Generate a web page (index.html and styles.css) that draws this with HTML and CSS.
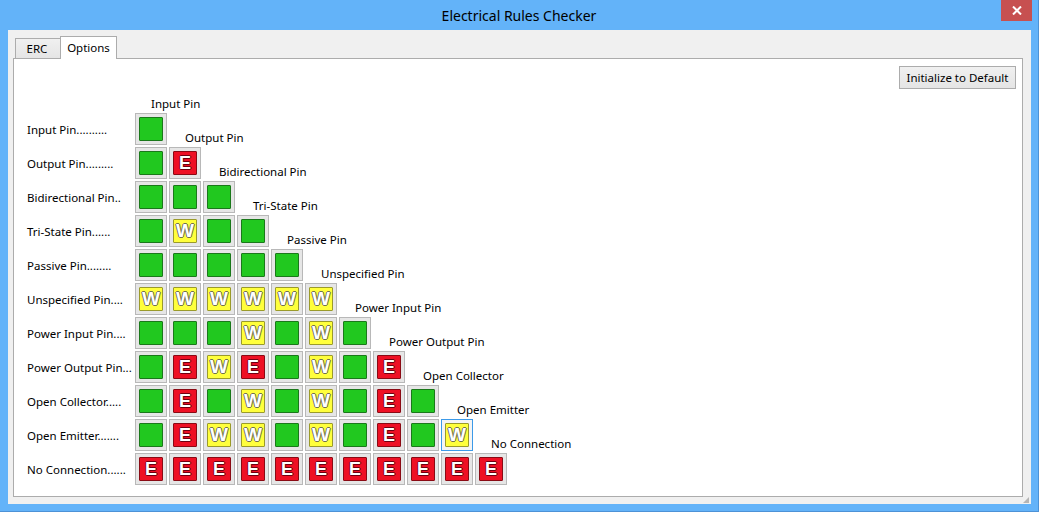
FILE: index.html
```html
<!DOCTYPE html>
<html lang="en">
<head>
    <meta charset="UTF-8">
    <title>Electrical Rules Checker</title>
    <link rel="stylesheet" href="styles.css">
</head>
<body>
    <div class="window">
        <div class="titlebar">
            <div></div>
            <div class="title">Electrical Rules Checker</div>
            <div class="title-right">
                <button class="close" aria-label="Close">
                    <svg width="10" height="9" viewBox="0 0 10 9"><path d="M1 0.5 L9 8.5 M9 0.5 L1 8.5" stroke="#fff" stroke-width="2"/></svg>
                </button>
            </div>
        </div>
        <div class="client">
            <div class="tabs">
                <div class="tab">ERC</div>
                <div class="tab active">Options</div>
            </div>
            <div class="panel">
                <div class="toolbar">
                    <button class="btn">Initialize to Default</button>
                </div>
                <div class="matrix">
                    <div class="row-label"></div>
                    <div class="col-head">Input Pin</div>

                    <div class="row-label">Input Pin..........</div>
                    <div class="cell"><span class="mark ok"></span></div>
                    <div class="col-head">Output Pin</div>

                    <div class="row-label">Output Pin.........</div>
                    <div class="cell"><span class="mark ok"></span></div>
                    <div class="cell"><span class="mark err">E</span></div>
                    <div class="col-head">Bidirectional Pin</div>

                    <div class="row-label">Bidirectional Pin..</div>
                    <div class="cell"><span class="mark ok"></span></div>
                    <div class="cell"><span class="mark ok"></span></div>
                    <div class="cell"><span class="mark ok"></span></div>
                    <div class="col-head">Tri-State Pin</div>

                    <div class="row-label">Tri-State Pin......</div>
                    <div class="cell"><span class="mark ok"></span></div>
                    <div class="cell"><span class="mark warn">W</span></div>
                    <div class="cell"><span class="mark ok"></span></div>
                    <div class="cell"><span class="mark ok"></span></div>
                    <div class="col-head">Passive Pin</div>

                    <div class="row-label">Passive Pin........</div>
                    <div class="cell"><span class="mark ok"></span></div>
                    <div class="cell"><span class="mark ok"></span></div>
                    <div class="cell"><span class="mark ok"></span></div>
                    <div class="cell"><span class="mark ok"></span></div>
                    <div class="cell"><span class="mark ok"></span></div>
                    <div class="col-head">Unspecified Pin</div>

                    <div class="row-label">Unspecified Pin....</div>
                    <div class="cell"><span class="mark warn">W</span></div>
                    <div class="cell"><span class="mark warn">W</span></div>
                    <div class="cell"><span class="mark warn">W</span></div>
                    <div class="cell"><span class="mark warn">W</span></div>
                    <div class="cell"><span class="mark warn">W</span></div>
                    <div class="cell"><span class="mark warn">W</span></div>
                    <div class="col-head">Power Input Pin</div>

                    <div class="row-label">Power Input Pin....</div>
                    <div class="cell"><span class="mark ok"></span></div>
                    <div class="cell"><span class="mark ok"></span></div>
                    <div class="cell"><span class="mark ok"></span></div>
                    <div class="cell"><span class="mark warn">W</span></div>
                    <div class="cell"><span class="mark ok"></span></div>
                    <div class="cell"><span class="mark warn">W</span></div>
                    <div class="cell"><span class="mark ok"></span></div>
                    <div class="col-head">Power Output Pin</div>

                    <div class="row-label">Power Output Pin...</div>
                    <div class="cell"><span class="mark ok"></span></div>
                    <div class="cell"><span class="mark err">E</span></div>
                    <div class="cell"><span class="mark warn">W</span></div>
                    <div class="cell"><span class="mark err">E</span></div>
                    <div class="cell"><span class="mark ok"></span></div>
                    <div class="cell"><span class="mark warn">W</span></div>
                    <div class="cell"><span class="mark ok"></span></div>
                    <div class="cell"><span class="mark err">E</span></div>
                    <div class="col-head">Open Collector</div>

                    <div class="row-label">Open Collector.....</div>
                    <div class="cell"><span class="mark ok"></span></div>
                    <div class="cell"><span class="mark err">E</span></div>
                    <div class="cell"><span class="mark ok"></span></div>
                    <div class="cell"><span class="mark warn">W</span></div>
                    <div class="cell"><span class="mark ok"></span></div>
                    <div class="cell"><span class="mark warn">W</span></div>
                    <div class="cell"><span class="mark ok"></span></div>
                    <div class="cell"><span class="mark err">E</span></div>
                    <div class="cell"><span class="mark ok"></span></div>
                    <div class="col-head">Open Emitter</div>

                    <div class="row-label">Open Emitter.......</div>
                    <div class="cell"><span class="mark ok"></span></div>
                    <div class="cell"><span class="mark err">E</span></div>
                    <div class="cell"><span class="mark warn">W</span></div>
                    <div class="cell"><span class="mark warn">W</span></div>
                    <div class="cell"><span class="mark ok"></span></div>
                    <div class="cell"><span class="mark warn">W</span></div>
                    <div class="cell"><span class="mark ok"></span></div>
                    <div class="cell"><span class="mark err">E</span></div>
                    <div class="cell"><span class="mark ok"></span></div>
                    <div class="cell focused"><span class="mark warn">W</span></div>
                    <div class="col-head">No Connection</div>

                    <div class="row-label">No Connection......</div>
                    <div class="cell"><span class="mark err">E</span></div>
                    <div class="cell"><span class="mark err">E</span></div>
                    <div class="cell"><span class="mark err">E</span></div>
                    <div class="cell"><span class="mark err">E</span></div>
                    <div class="cell"><span class="mark err">E</span></div>
                    <div class="cell"><span class="mark err">E</span></div>
                    <div class="cell"><span class="mark err">E</span></div>
                    <div class="cell"><span class="mark err">E</span></div>
                    <div class="cell"><span class="mark err">E</span></div>
                    <div class="cell"><span class="mark err">E</span></div>
                    <div class="cell"><span class="mark err">E</span></div>
                </div>
            </div>
            <div class="grip"></div>
        </div>
    </div>
</body>
</html>
```

FILE: styles.css
```css
body {
    margin: 0;
    background: #63b3f9;
    font-family: 'Noto Sans', 'Liberation Sans', sans-serif;
    font-size: 11.5px;
    color: #000;
    overflow: hidden;
}
.window {
    width: 1039px;
    height: 512px;
    box-sizing: border-box;
    background: #63b3f9;
    border-right: 1px solid #4d92d6;
    border-bottom: 1px solid #4d92d6;
    display: flex;
    flex-direction: column;
}
.titlebar {
    height: 30px;
    display: grid;
    grid-template-columns: 1fr auto 1fr;
    align-items: start;
}
.title {
    font-size: 14px;
    line-height: 31px;
}
.title-right {
    display: flex;
    justify-content: flex-end;
    padding-right: 6px;
}
.close {
    width: 31px;
    height: 21px;
    padding: 0;
    border: none;
    background: #c75050;
    display: flex;
    align-items: center;
    justify-content: center;
}
.client {
    flex: 1;
    margin: 0 7px 7px 8px;
    background: #f0f0f0;
    position: relative;
    display: flex;
    flex-direction: column;
    padding: 6px 8px 7px 5px;
}
.tabs {
    display: flex;
    align-items: flex-end;
    padding-left: 2px;
    height: 22px;
    position: relative;
    z-index: 1;
}
.tab {
    height: 20px;
    box-sizing: border-box;
    border: 1px solid #acacac;
    border-bottom: none;
    background: linear-gradient(#f0f0f0, #e5e5e5);
    padding: 0 8px 0 6px;
    width: 46px;
    line-height: 19px;
    text-align: center;
}
.tab.active {
    height: 23px;
    width: 57px;
    margin-bottom: -1px;
    margin-left: -1px;
    background: #fff;
    line-height: 21px;
    padding: 0;
}
.panel {
    flex: 1;
    background: #fff;
    border: 1px solid #acacac;
    padding: 7px 6px 0 13px;
}
.toolbar {
    display: flex;
    justify-content: flex-end;
}
.btn {
    width: 117px;
    height: 23px;
    font-family: inherit;
    font-size: 11.5px;
    color: #000;
    border: 1px solid #acacac;
    background: linear-gradient(#f0f0f0, #e5e5e5);
    padding: 0;
}
.matrix {
    display: grid;
    grid-template-columns: 106px repeat(11, 32px);
    grid-template-rows: 22px repeat(11, 32px);
    gap: 2px;
}
.row-label {
    grid-column: 1;
    align-self: center;
    white-space: nowrap;
}
.col-head {
    align-self: end;
    line-height: 14px;
    padding-left: 16px;
    white-space: nowrap;
}
.cell {
    width: 32px;
    height: 32px;
    box-sizing: border-box;
    border: 1px solid #b8b8b8;
    background: #e6e6e6;
    padding: 3px;
}
.cell.focused {
    border-color: #3c9ae8;
    background: #f4f4f4;
}
.mark {
    display: flex;
    align-items: center;
    justify-content: center;
    width: 24px;
    height: 24px;
    box-sizing: border-box;
    border: 1px solid;
    border-radius: 1px;
    font-family: 'Liberation Sans', Arial, sans-serif;
    font-weight: bold;
    font-size: 18px;
    color: #fff;
}
.ok {
    background: #21c81f;
    border-color: #1a781a;
}
.err {
    background: #ee1024;
    border-color: #8a0a14;
    text-shadow: 1px 0 #6e0010, -1px 0 #6e0010, 0 1px #6e0010, 0 -1px #6e0010;
}
.warn {
    background: #ffff3c;
    border-color: #9a9a2a;
    font-size: 19px;
    letter-spacing: -1px;
    text-indent: -1px;
    text-shadow: 1px 0 #707050, -1px 0 #707050, 0 1px #707050, 0 -1px #707050;
}
.grip {
    position: absolute;
    right: 2px;
    bottom: 1px;
    width: 6px;
    height: 6px;
    background:
        radial-gradient(circle, #b5b5b5 1px, transparent 1.2px) 0 0 / 2px 2px;
    clip-path: polygon(100% 0, 100% 100%, 0 100%);
}
```
